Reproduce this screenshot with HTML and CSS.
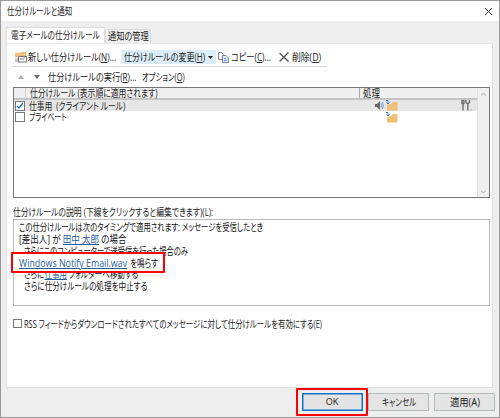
FILE: index.html
```
<!DOCTYPE html>
<html lang="ja">
<head>
    <meta charset="UTF-8">
    <title>仕分けルールと通知</title>
    <link rel="stylesheet" href="styles.css">
</head>
<body>
    <div class="dialog">
        <div class="titlebar">
            <span class="txt txt-title">仕分けルールと通知</span>
            <svg class="close" width="9" height="9" viewBox="0 0 9 9"><path d="M1 1l7 7M8 1l-7 7" stroke="#333" fill="none"/></svg>
        </div>

        <div class="tabs">
            <div class="tab active"><span class="txt txt-tab1">電子メールの仕分けルール</span></div>
            <div class="tab"><span class="txt txt-tab2">通知の管理</span></div>
        </div>

        <div class="panel">
            <div class="toolbar">
                <svg class="icon-new" width="12" height="12" viewBox="0 0 12 12">
                    <path d="M0 2h5l1-1h5v5H0z" fill="#f0c078"/>
                    <path d="M0 8h3M0 10h3" stroke="#999"/>
                    <rect x="3.5" y="5.500" width="8" height="5.500" fill="#fff" stroke="#777"/>
                    <path d="M5 8h4M8.500 7h1.500" stroke="#888"/>
                </svg>
                <span class="txt txt-new">新しい仕分けルール(<u>N</u>)...</span>
                <div class="change">
                    <span class="txt txt-change">仕分けルールの変更(<u>H</u>)</span>
                    <svg width="5" height="3" viewBox="0 0 5 3"><path d="M0 0h5L2.500 3z" fill="#222"/></svg>
                </div>
                <svg class="icon-copy" width="11" height="11" viewBox="0 0 11 11">
                    <path d="M.5 .5h3l2 2v5h-5z" fill="#fff" stroke="#8a8a8a"/>
                    <path d="M4.500 3.500h3.500l2.500 2.500v4.500h-6z" fill="#eaf3fb" stroke="#6f7f8f"/>
                    <path d="M6 6.500h2M6 8.500h3" stroke="#5b9bd5"/>
                </svg>
                <span class="txt txt-copy">コピー(<u>C</u>)...</span>
                <svg class="icon-delete" width="10" height="10" viewBox="0 0 10 10"><path d="M.5 1l9 8.500M9.500 .5l-9 9" stroke="#555" stroke-width="1.400" fill="none"/></svg>
                <span class="txt txt-delete">削除(<u>D</u>)</span>
            </div>

            <div class="toolbar second">
                <svg width="6" height="4" viewBox="0 0 6 4"><path d="M0 4h6L3 0z" fill="#aaa"/></svg>
                <svg class="down" width="6" height="4" viewBox="0 0 6 4"><path d="M0 0h6L3 4z" fill="#666"/></svg>
                <span class="txt txt-run">仕分けルールの実行(<u>R</u>)...</span>
                <span class="txt txt-option">オプション(<u>O</u>)</span>
            </div>

            <div class="rules">
                <div class="list">
                    <div class="head">
                        <div class="head-name"><span class="txt txt-head">仕分けルール (表示順に適用されます)</span></div>
                        <div class="head-action"><span class="txt txt-action">処理</span></div>
                    </div>
                    <div class="rule selected">
                        <span class="check"><svg width="8" height="8" viewBox="0 0 8 8"><path d="M1 4l2 2 4-5" stroke="#2a6fc0" stroke-width="1.300" fill="none"/></svg></span>
                        <span class="txt txt-rule1">仕事用&nbsp; (クライアント ルール)</span>
                        <svg class="icon-sound" width="9" height="9" viewBox="0 0 9 9">
                            <path d="M0 3h2l3-3v9L2 6H0z" fill="#666"/>
                            <path d="M6 2.500q1.500 2 0 4M7.300 1q2.200 3.500 0 7" stroke="#6a9bd0" fill="none"/>
                        </svg>
                        <svg class="icon-folder" width="12" height="11" viewBox="0 0 12 11">
                            <path d="M1 5l4-1 2-2h4.500v8.500H1z" fill="#f0c078"/>
                            <path d="M0 .5h2v3M.5 2.500L2 4l1.500-1.500" stroke="#3a78c0" fill="none"/>
                        </svg>
                        <svg class="icon-tools" width="12" height="11" viewBox="0 0 12 11">
                            <path d="M1 .5h2v3H1zM2 4v6.500" stroke="#666" stroke-width="1.300" fill="none"/>
                            <path d="M5 0v2.500L6.800 4 8.500 2.500V0M6.800 4v6.500" stroke="#666" stroke-width="1.300" fill="none"/>
                            <path d="M9 10h2" stroke="#aaa"/>
                        </svg>
                    </div>
                    <div class="rule">
                        <span class="check"></span>
                        <span class="txt txt-rule2">プライベート</span>
                        <svg class="icon-folder" width="12" height="11" viewBox="0 0 12 11">
                            <path d="M1 5l4-1 2-2h4.500v8.500H1z" fill="#f0c078"/>
                            <path d="M0 .5h2v3M.5 2.500L2 4l1.500-1.500" stroke="#3a78c0" fill="none"/>
                        </svg>
                    </div>
                </div>
                <div class="scrollbar">
                    <svg width="5" height="4" viewBox="0 0 5 4"><path d="M0 3.500L2.500 1 5 3.500" stroke="#aaa" fill="none"/></svg>
                    <svg width="5" height="4" viewBox="0 0 5 4"><path d="M0 .5L2.500 3 5 .5" stroke="#aaa" fill="none"/></svg>
                </div>
            </div>

            <div class="label"><span class="txt txt-label">仕分けルールの説明 (下線をクリックすると編集できます)(L):</span></div>

            <div class="description">
                <div class="line"><span class="txt txt-line1">この仕分けルールは次のタイミングで適用されます: メッセージを受信したとき</span></div>
                <div class="line"><span class="txt txt-line2">[差出人] が <a>田中 太郎</a> の場合</span></div>
                <div class="line indent"><span class="txt txt-line3">さらにこのコンピューターで送受信を行った場合のみ</span></div>
                <div class="line marked">
                    <span class="txt txt-wav"><a>Windows Notify Email.wav</a></span>
                    <span class="txt txt-sound">を鳴らす</span>
                </div>
                <div class="line indent"><span class="txt txt-line5">さらに<a>仕事用</a> フォルダーへ移動する</span></div>
                <div class="line indent"><span class="txt txt-line6">さらに仕分けルールの処理を中止する</span></div>
            </div>

            <div class="rss">
                <span class="check"></span>
                <span class="txt txt-rss">RSS フィードからダウンロードされたすべてのメッセージに対して仕分けルールを有効にする(E)</span>
            </div>
        </div>

        <div class="buttons">
            <div class="ok-frame"><button class="ok">OK</button></div>
            <button class="cancel"><span class="txt txt-cancel">キャンセル</span></button>
            <button class="apply"><span class="txt txt-apply">適用(A)</span></button>
        </div>
    </div>
</body>
</html>
```
FILE: styles.css
```
* {
    box-sizing: border-box;
}

body {
    margin: 0;
    font: 10px/12px "Open Sans", "Noto Sans CJK JP", sans-serif;
    font-feature-settings: "palt";
    color: #222;
}

svg {
    display: block;
    flex: none;
}

.dialog {
    width: 500px;
    height: 418px;
    border: 1px solid #999;
    background: #eee;
    overflow: hidden;
}

/* condensed UI text: width is the drawn width, glyphs are scaled to it */
.txt {
    display: block;
    flex: none;
    white-space: nowrap;
    transform-origin: 0 50%;
}

.txt-title { width: 65px; transform: scaleX(.75); }
.txt-tab1 { width: 88px; transform: scaleX(.765); }
.txt-tab2 { width: 41px; transform: scaleX(.82); }
.txt-new { width: 89px; transform: scaleX(.82); }
.txt-change { width: 81px; transform: scaleX(.8); }
.txt-copy { width: 40px; transform: scaleX(.82); }
.txt-delete { width: 29px; transform: scaleX(.88); }
.txt-run { width: 89px; transform: scaleX(.82); }
.txt-option { width: 43px; transform: scaleX(.74); }
.txt-head { width: 128px; transform: scaleX(.78); }
.txt-action { width: 17px; transform: scaleX(.85); }
.txt-rule1 { width: 96px; transform: scaleX(.775); }
.txt-rule2 { width: 38px; transform: scaleX(.69); }
.txt-label { width: 200px; transform: scaleX(.78); }
.txt-line1 { width: 244px; transform: scaleX(.735); }
.txt-line2 { width: 107px; transform: scaleX(.85); }
.txt-line3 { width: 164px; transform: scaleX(.73); }
.txt-wav { width: 111px; transform: scaleX(.885); }
.txt-sound { width: 28px; transform: scaleX(.76); }
.txt-line5 { width: 114px; transform: scaleX(.75); }
.txt-line6 { width: 123px; transform: scaleX(.76); }
.txt-rss { width: 298px; transform: scaleX(.743); }
.txt-cancel { width: 34px; transform: scaleX(.755); }
.txt-apply { width: 30px; transform: scaleX(.93); }

.titlebar {
    display: flex;
    justify-content: space-between;
    align-items: center;
    height: 20px;
    padding: 0 6px;
    background: #fff;
}

.tabs {
    display: flex;
    align-items: flex-end;
    height: 22px;
    padding-left: 5px;
}

.tab {
    height: 14px;
    width: 46px;
    padding: 0 0 0 2px;
    border: 1px solid #ddd;
    border-bottom: none;
    background: #f0f0f0;
}

.tab.active {
    width: 99px;
    height: 16px;
    padding: 1px 0 0 4px;
    background: #fff;
}

.panel {
    width: 487px;
    height: 345px;
    margin-left: 5px;
    padding: 6px 0 0 6px;
    border: 1px solid #e0e0e0;
    border-top-color: #e6e6e6;
    background: #fff;
}

.toolbar {
    display: flex;
    align-items: center;
    width: 314px;
    height: 17px;
    padding: 0 0 2px 2px;
    border-bottom: 1px solid #d8d8d8;
}

.txt-new {
    margin-left: 1px;
}

.change {
    display: flex;
    align-items: center;
    gap: 3px;
    width: 95px;
    height: 14px;
    margin-left: 4px;
    padding-left: 3px;
    background: #dcedfa;
}

.icon-copy {
    margin: 0 2px;
}

.icon-delete {
    margin: 0 3px 0 8px;
}

.toolbar.second {
    height: 20px;
    padding: 0 0 0 5px;
    border-bottom: none;
}

.down {
    margin: 0 8px 0 10px;
}

.txt-option {
    margin-left: 5px;
}

.rules {
    display: flex;
    width: 477px;
    height: 111px;
    border: 1px solid #777;
}

.list {
    flex: 1;
}

.head {
    display: flex;
    height: 12px;
    background: #f0f0f0;
    border-bottom: 2px solid #c4c4c4;
    line-height: 10px;
}

.head-name {
    width: 334px;
    margin-left: 11px;
    padding-left: 4px;
    border-left: 1px solid #ccc;
}

.head-action {
    padding-left: 3px;
    border-left: 1px solid #aaa;
}

.rule {
    display: flex;
    align-items: center;
    height: 12px;
    padding-left: 1px;
}

.rule.selected {
    height: 11px;
    background: #e6e6e6;
}

.check {
    flex: none;
    display: flex;
    align-items: center;
    justify-content: center;
    width: 10px;
    height: 10px;
    margin-right: 4px;
    border: 1px solid #777;
    background: #fff;
}

.icon-sound {
    margin-left: 250px;
}

.icon-sound + .icon-folder {
    margin-left: 2px;
}

.txt-rule2 + .icon-folder {
    margin-left: 319px;
}

.icon-tools {
    margin-left: 63px;
}

.scrollbar {
    display: flex;
    flex-direction: column;
    justify-content: space-between;
    align-items: center;
    width: 12px;
    padding: 4px 0 3px;
    border-left: 1px solid #ddd;
    background: #f0f0f0;
}

.label {
    height: 21px;
    padding-top: 8px;
}

.description {
    width: 477px;
    height: 87px;
    padding: 1px 0 0 5px;
    border: 1px solid #bbb;
}

.line {
    display: flex;
    align-items: center;
    height: 12px;
    color: #111;
}

.indent {
    padding-left: 5px;
}

.line a {
    color: #1f5f99;
    text-decoration: underline;
}

/* red callout lies over the neighbouring lines */
.marked {
    position: relative;
    z-index: 1;
    height: 11px;
}

.marked::before {
    content: "";
    position: absolute;
    z-index: -1;
    left: -8px;
    top: -5px;
    width: 150px;
    height: 17px;
    border: 2px solid #ff0000;
    border-radius: 1px;
    background: #fff;
}

.rss {
    display: flex;
    align-items: center;
    height: 35px;
}

.rss .check {
    width: 9px;
    height: 9px;
    margin-right: 2px;
}

.buttons {
    display: flex;
    align-items: center;
    justify-content: flex-end;
    height: 28px;
    padding-right: 4px;
}

button {
    display: flex;
    align-items: center;
    justify-content: center;
    height: 18px;
    padding: 0;
    border: 1px solid #b4bcba;
    background: #e4e4e4;
    font: inherit;
    font-feature-settings: inherit;
    color: #222;
}

.ok-frame {
    display: flex;
    align-items: center;
    justify-content: center;
    width: 72px;
    height: 28px;
    border: 2px solid #ff0000;
    border-radius: 1px;
}

.ok {
    width: 61px;
    border: 1px solid #0c74cc;
    box-shadow: inset 0 0 0 .5px #0c74cc;
    font-size: 9px;
}

.cancel {
    width: 61px;
    margin-right: 5px;
}

.apply {
    width: 61px;
}
```
